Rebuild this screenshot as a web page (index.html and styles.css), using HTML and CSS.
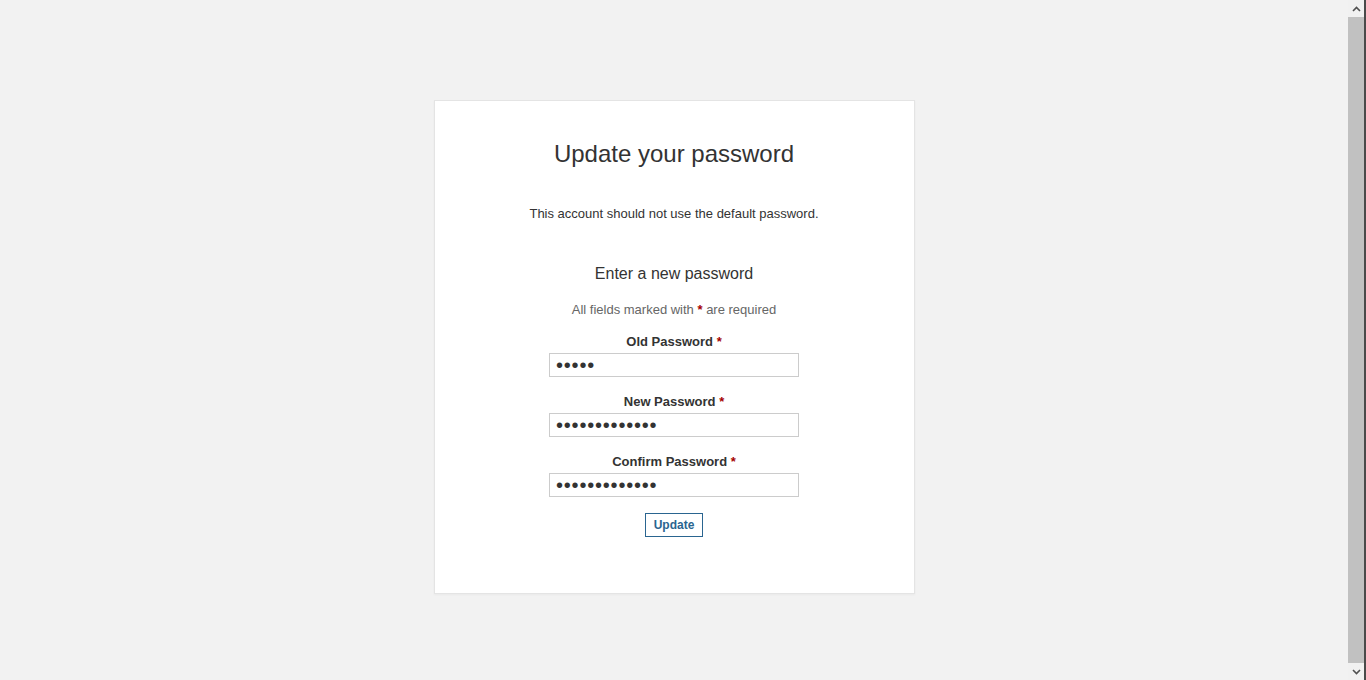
FILE: index.html
```html
<!DOCTYPE html>
<html lang="en">
<head>
    <meta charset="UTF-8">
    <title>Update your password</title>
    <link rel="stylesheet" href="styles.css">
</head>
<body>
    <div class="page">
        <div class="main">
            <div class="card">
                <h1>Update your password</h1>
                <p class="notice">This account should not use the default password.</p>
                <h2>Enter a new password</h2>
                <p class="hint">All fields marked with <span class="req">*</span> are required</p>
                <form class="form">
                    <div class="field">
                        <label>Old Password <span class="req">*</span></label>
                        <input type="password" value="admin">
                    </div>
                    <div class="field">
                        <label>New Password <span class="req">*</span></label>
                        <input type="password" value="newpassword12">
                    </div>
                    <div class="field">
                        <label>Confirm Password <span class="req">*</span></label>
                        <input type="password" value="newpassword12">
                    </div>
                    <button type="button" class="btn">Update</button>
                </form>
            </div>
        </div>
        <div class="scrollbar">
            <div class="arrow">
                <svg width="9" height="6" viewBox="0 0 9 6"><path d="M1 5 L4.5 1.5 L8 5" fill="none" stroke="#505050" stroke-width="1.6"/></svg>
            </div>
            <div class="track"><div class="thumb"></div></div>
            <div class="arrow">
                <svg width="9" height="6" viewBox="0 0 9 6"><path d="M1 1 L4.5 4.5 L8 1" fill="none" stroke="#505050" stroke-width="1.6"/></svg>
            </div>
        </div>
    </div>
</body>
</html>
```

FILE: styles.css
```css
* {
    margin: 0;
    padding: 0;
    box-sizing: border-box;
}

html, body {
    height: 100%;
    overflow: hidden;
}

body {
    font-family: "Liberation Sans", Arial, sans-serif;
    background: #f2f2f2;
    color: #333;
}

.page {
    display: flex;
    height: 100%;
}

.main {
    flex: 1;
    padding-top: 100px;
    display: flex;
    justify-content: center;
    align-items: flex-start;
}

.card {
    width: 481px;
    height: 494px;
    background: #fff;
    border: 1px solid #e4e4e4;
    box-shadow: 0 1px 2px rgba(0, 0, 0, 0.04);
    text-align: center;
    padding-top: 39px;
}

h1 {
    font-size: 24px;
    font-weight: normal;
    line-height: 28px;
    color: #333;
}

.notice {
    font-size: 13px;
    line-height: 16px;
    margin-top: 38px;
    color: #333;
}

h2 {
    font-size: 16px;
    font-weight: normal;
    line-height: 20px;
    margin-top: 42px;
    color: #333;
}

.hint {
    font-size: 13px;
    line-height: 16px;
    margin-top: 18px;
    color: #666;
}

.req {
    color: #a50000;
    font-weight: bold;
}

.form {
    margin-top: 15px;
    display: flex;
    flex-direction: column;
    align-items: center;
}

.field {
    display: flex;
    flex-direction: column;
    align-items: center;
    margin-bottom: 16px;
}

.field label {
    font-size: 13px;
    font-weight: bold;
    line-height: 18px;
    margin-bottom: 2px;
    color: #333;
}

.field input {
    width: 250px;
    height: 24px;
    border: 1px solid #ccc;
    padding: 0 6px;
    font-family: "Liberation Sans", Arial, sans-serif;
    font-size: 20px;
    color: #333;
    letter-spacing: 0.8px;
    outline: none;
}

.btn {
    width: 58px;
    height: 24px;
    background: #fff;
    border: 1px solid #2a6590;
    color: #2a6590;
    font-family: "Liberation Sans", Arial, sans-serif;
    font-size: 12px;
    font-weight: bold;
    cursor: pointer;
}

.scrollbar {
    width: 18px;
    display: flex;
    flex-direction: column;
    background: #f1f1f1;
    border-right: 2px solid #4a4a4a;
}

.arrow {
    height: 17px;
    display: flex;
    justify-content: center;
    align-items: center;
}

.track {
    flex: 1;
}

.thumb {
    height: 100%;
    background: #c1c1c1;
}
```
